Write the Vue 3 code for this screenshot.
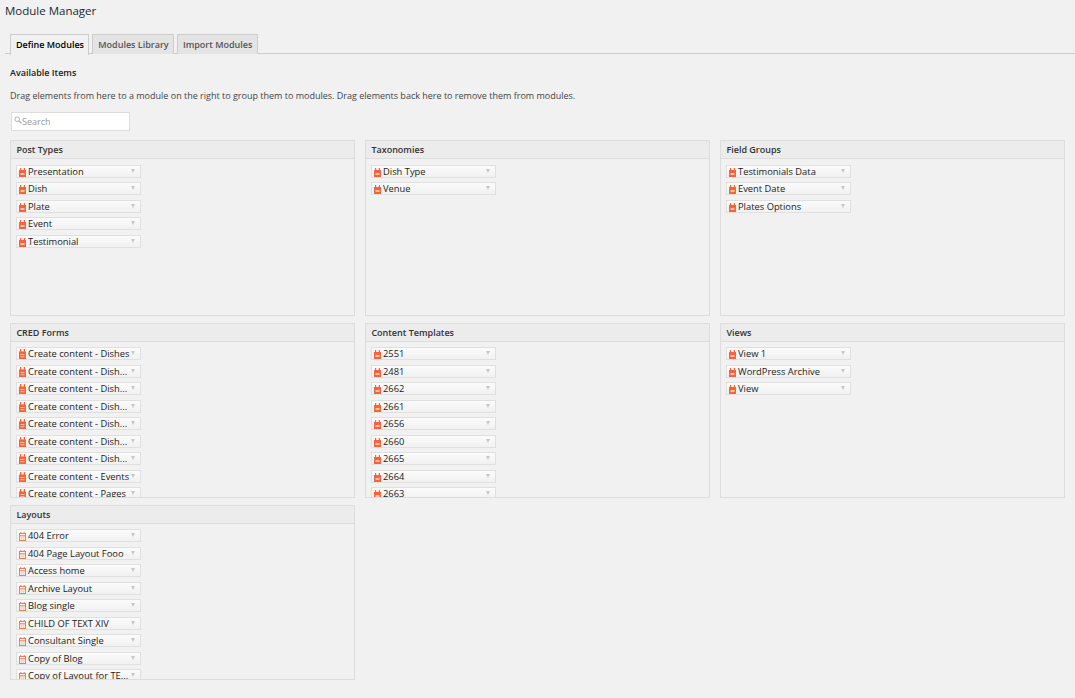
<script setup>
const panels = [
  { title: 'Post Types', icon: 'solid', items: ['Presentation', 'Dish', 'Plate', 'Event', 'Testimonial'] },
  { title: 'Taxonomies', icon: 'solid', items: ['Dish Type', 'Venue'] },
  { title: 'Field Groups', icon: 'solid', items: ['Testimonials Data', 'Event Date', 'Plates Options'] },
  { title: 'CRED Forms', icon: 'tall', items: ['Create content - Dishes', 'Create content - Dish...', 'Create content - Dish...', 'Create content - Dish...', 'Create content - Dish...', 'Create content - Dish...', 'Create content - Dish...', 'Create content - Events', 'Create content - Pages'] },
  { title: 'Content Templates', icon: 'solid', items: ['2551', '2481', '2662', '2661', '2656', '2660', '2665', '2664', '2663'] },
  { title: 'Views', icon: 'solid', items: ['View 1', 'WordPress Archive', 'View'] },
  { title: 'Layouts', icon: 'outline', items: ['404 Error', '404 Page Layout Fooo', 'Access home', 'Archive Layout', 'Blog single', 'CHILD OF TEXT XIV', 'Consultant Single', 'Copy of Blog', 'Copy of Layout for TE...'] },
]
</script>

<template>
  <div class="page">
    <h1 class="title">Module Manager</h1>
    <div class="tabs">
      <span class="tab active">Define Modules</span>
      <span class="tab">Modules Library</span>
      <span class="tab">Import Modules</span>
    </div>
    <div class="body">
      <h2 class="heading">Available Items</h2>
      <p class="hint">Drag elements from here to a module on the right to group them to modules. Drag elements back here to remove them from modules.</p>
      <div class="search">
        <svg class="lens" width="8" height="8" viewBox="0 0 8 8">
          <circle cx="3.2" cy="3.2" r="2.3" fill="none" stroke="#b0b0b0" stroke-width="1" />
          <path d="M5 5L7.5 7.5" stroke="#b0b0b0" stroke-width="1.2" />
        </svg>
        <span>Search</span>
      </div>
      <div class="grid">
        <section v-for="p in panels" :key="p.title" class="panel">
          <header class="panel-head">{{ p.title }}</header>
          <ul class="list">
            <li v-for="(item, i) in p.items" :key="i" class="item">
              <svg v-if="p.icon === 'solid'" class="icon" width="7" height="9" viewBox="0 0 7 9">
                <path d="M1 0h1.2v2h2.6V0H6v2h1v7H0V2h1z" fill="#f8633c" />
                <rect x="1.5" y="5" width="4" height="2" rx=".5" fill="#fcc3b2" />
              </svg>
              <svg v-else-if="p.icon === 'tall'" class="icon tall" width="7" height="10" viewBox="0 0 7 10">
                <path d="M1 0h1.3v2.5h2.4V0H6v2.5h1V10H0V2.5h1z" fill="#f8633c" />
                <rect x="1.5" y="5" width="4" height="1" fill="#fcc3b2" />
                <rect x="1.5" y="7.2" width="4" height="1" fill="#fcc3b2" />
              </svg>
              <svg v-else class="icon" width="7" height="9" viewBox="0 0 7 9">
                <path d="M1.8 0v2M5.2 0v2" stroke="#f0795a" stroke-width="1" />
                <rect x=".5" y="1.5" width="6" height="7" fill="none" stroke="#f0795a" />
                <path d="M.5 3.8h6" stroke="#f0795a" stroke-width="1" />
                <path d="M.5 6h6M2.7 4v4M4.6 4v4" stroke="#f9c0b0" stroke-width=".6" />
              </svg>
              <span class="label">{{ item }}</span>
              <span class="caret"></span>
            </li>
          </ul>
        </section>
      </div>
    </div>
  </div>
</template>

<style>
html, body { background: #f1f1f1; }
</style>

<style scoped>
.page {
  width: 1075px;
  height: 698px;
  overflow: hidden;
  background: #f1f1f1;
  font-family: "Open Sans", sans-serif;
  color: #333;
  box-sizing: border-box;
  padding-left: 5px;
}
.title {
  margin: 0;
  padding-top: 2px;
  height: 34px;
  box-sizing: border-box;
  font-size: 11.5px;
  line-height: 18px;
  font-weight: 400;
  color: #23282d;
}
.tabs {
  display: flex;
  gap: 3px;
  height: 19px;
  padding-left: 5px;
  border-bottom: 1px solid #ccc;
}
.tab {
  height: 19px;
  padding: 0 4.3px 0 5px;
  border: 1px solid #ccc;
  border-bottom: 0;
  background: #e4e4e4;
  font-size: 9px;
  font-weight: 600;
  line-height: 19px;
  color: #555;
}
.tab.active {
  height: 20px;
  background: #f1f1f1;
  color: #000;
}
.body { padding: 0 0 0 5px; }
.heading {
  margin: 0;
  padding-top: 12px;
  font-size: 9px;
  line-height: 14px;
  font-weight: 600;
  color: #222;
}
.hint {
  margin: 9px 0 0;
  font-size: 9px;
  line-height: 14px;
  color: #444;
}
.search {
  display: flex;
  align-items: center;
  width: 115px;
  height: 17px;
  margin: 9px 0 0 1px;
  padding-left: 2px;
  border: 1px solid #ddd;
  background: #fff;
  font-size: 9px;
  color: #9a9a9a;
}
.lens { margin-top: -3px; }
.grid {
  display: grid;
  grid-template-columns: repeat(3, 345px);
  grid-auto-rows: 175.6px;
  column-gap: 10px;
  row-gap: 6.7px;
  margin-top: 9.3px;
}
.panel {
  box-sizing: border-box;
  border: 1px solid #ddd;
  overflow: hidden;
}
.panel-head {
  height: 18px;
  box-sizing: border-box;
  padding-left: 5.4px;
  border-bottom: 1px solid #ddd;
  background: #ececec;
  font-size: 9px;
  font-weight: 600;
  line-height: 17px;
  color: #333;
}
.list {
  list-style: none;
  margin: 0;
  padding: 5.5px 0 0 5px;
}
.item {
  display: flex;
  align-items: center;
  position: relative;
  width: 125px;
  height: 13px;
  margin-bottom: 4.5px;
  padding-left: 1px;
  box-sizing: border-box;
  border: 1px solid #e0e0e0;
  background: linear-gradient(#fbfbfb, #f1f1f1);
  font-size: 9.35px;
  font-weight: 400;
  color: #222;
}
.icon { flex: none; margin: 2px 0 0 1px; }
.tall { margin-top: 1px; }
.label {
  margin-left: 2px;
  white-space: nowrap;
  line-height: 11px;
}
.caret {
  position: absolute;
  right: 5px;
  top: 3px;
  width: 0;
  height: 0;
  border-left: 2.5px solid transparent;
  border-right: 2.5px solid transparent;
  border-top: 4px solid #c8c8c8;
}
</style>
